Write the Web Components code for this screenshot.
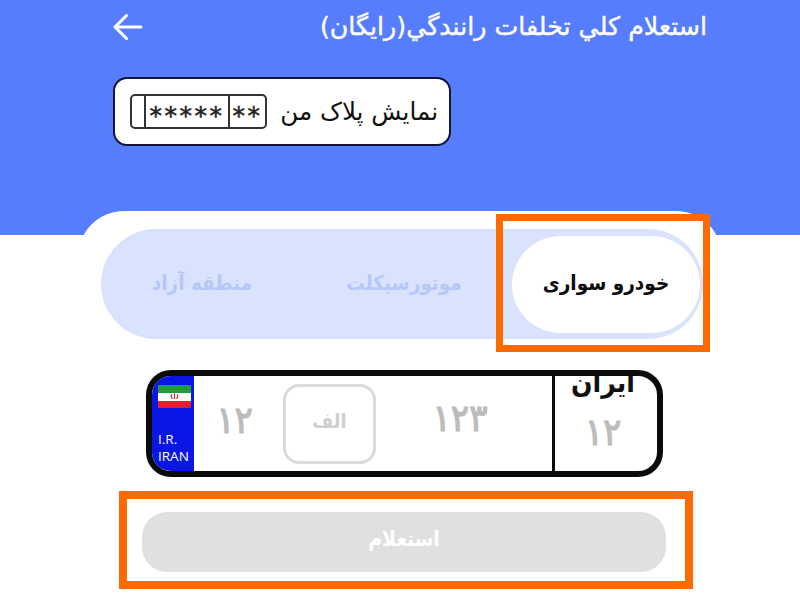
<!DOCTYPE html>
<html lang="fa">
<head>
<meta charset="utf-8">
<title>استعلام</title>
<style>
html, body { margin: 0; padding: 0; background: #fff; }
body { width: 800px; height: 600px; overflow: hidden; position: relative; font-family: "DejaVu Sans", sans-serif; }
</style>
</head>
<body>
<app-hero>
  <span slot="title">استعلام كلي تخلفات رانندگي(رايگان)</span>
  <my-plate-chip>نمایش پلاک من</my-plate-chip>
</app-hero>
<app-sheet>
  <vehicle-tabs>
    <tab-item active>خودرو سواری</tab-item>
    <tab-item>موتورسیکلت</tab-item>
    <tab-item>منطقه آزاد</tab-item>
  </vehicle-tabs>
  <plate-input></plate-input>
  <submit-button>استعلام</submit-button>
</app-sheet>
<mark-box style="--x:496px;--y:214px;--w:214px;--h:138px;--b:7px"></mark-box>
<mark-box style="--x:119px;--y:491px;--w:574px;--h:98px;--b:8px"></mark-box>

<script>
class AppHero extends HTMLElement {
  constructor() {
    super();
    this.attachShadow({mode: "open"}).innerHTML = `
    <style>
      :host { display: block; height: 235px; background: #567dfd; color: #fff; box-sizing: border-box; padding: 9px 93px 0 113px; }
      .top { display: flex; justify-content: space-between; align-items: center; height: 36px; }
      .title { font-size: 25.300px; line-height: 36px; white-space: nowrap; -webkit-text-stroke: 0.400px #fff; }
      svg { display: block; }
      .chip { margin-top: 32px; }
    </style>
    <div class="top">
      <svg width="30" height="28" viewBox="0 0 30 28" fill="none" stroke="#fff" stroke-width="3" stroke-linecap="round" stroke-linejoin="round">
        <path d="M28 14H2.500M13.500 2.500L2 14l11.500 11.500"/>
      </svg>
      <div class="title" dir="rtl"><slot name="title"></slot></div>
    </div>
    <div class="chip"><slot></slot></div>`;
  }
}

class MyPlateChip extends HTMLElement {
  constructor() {
    super();
    this.attachShadow({mode: "open"}).innerHTML = `
    <style>
      :host { display: flex; align-items: center; justify-content: space-between; box-sizing: border-box; width: 338px; height: 69px;
        padding: 0 11px 0 15px; background: #fff; border: 2px solid #14143c; border-radius: 14px; color: #111; }
      .label { font-size: 24.600px; white-space: nowrap; }
      .mini { display: flex; align-items: stretch; box-sizing: border-box; width: 137px; height: 35px; border: 2px solid #333; border-radius: 5px; color: #222; font-size: 25px; -webkit-text-stroke: 0.500px #222; }
      .mini span { display: block; box-sizing: border-box; height: 31px; padding-top: 8px; line-height: 23px; white-space: nowrap; letter-spacing: 2.500px; }
      .a { width: 12px; }
      .b { width: 86px; border-left: 2px solid #333; border-right: 2px solid #333; text-align: center; }
      .c { flex: 1; text-align: center; }
    </style>
    <div class="mini"><span class="a"></span><span class="b">*****</span><span class="c">**</span></div>
    <div class="label" dir="rtl"><slot></slot></div>`;
  }
}

class AppSheet extends HTMLElement {
  constructor() {
    super();
    this.attachShadow({mode: "open"}).innerHTML = `
    <style>
      :host { display: flex; flex-direction: column; align-items: flex-start; box-sizing: border-box; width: 644px; height: 389px; margin: -24px 0 0 78px;
        padding: 18px 0 0 23px; background: #fff; border-radius: 46px 46px 0 0; position: relative; }
    </style>
    <slot></slot>`;
  }
}

class VehicleTabs extends HTMLElement {
  constructor() {
    super();
    this.attachShadow({mode: "open"}).innerHTML = `
    <style>
      :host { display: flex; flex: none; box-sizing: border-box; width: 602px; height: 110px; padding: 7px 3px; background: #d9e3fd; border-radius: 55px; }
      div { display: flex; width: 100%; }
    </style>
    <div dir="rtl"><slot></slot></div>`;
  }
}

class TabItem extends HTMLElement {
  constructor() {
    super();
    this.attachShadow({mode: "open"}).innerHTML = `
    <style>
      :host { display: flex; flex: none; align-items: center; justify-content: center; width: 188px; height: 97px; border-radius: 49px; font-family: "DejaVu Sans Condensed", "DejaVu Sans", sans-serif; font-size: 20.500px; font-weight: bold; color: #b6c8f8; white-space: nowrap; padding-bottom: 4px; box-sizing: border-box; }
      :host([active]) { background: #fff; color: #0c0c0c; }
      :host(:nth-child(2)) { width: 216px; }
      :host(:nth-child(3)) { flex: 1; padding-left: 4px; }
    </style>
    <slot></slot>`;
  }
}

class PlateInput extends HTMLElement {
  constructor() {
    super();
    this.attachShadow({mode: "open"}).innerHTML = `
    <style>
      :host { display: flex; flex: none; box-sizing: border-box; width: 517px; height: 107px; margin: 31px 0 0 45px; border: 6px solid #0b0b0b; border-radius: 25px; overflow: hidden; background: #fff; color: #bcbcbc; font-family: "DejaVu Sans Condensed", "DejaVu Sans", sans-serif; font-size: 38px; }
      .eu { flex: none; width: 42px; background: #0a16e6; color: #fff; font: 13.500px/17px "Open Sans", sans-serif; display: flex; flex-direction: column; padding: 9px 0 0 6px; box-sizing: border-box; }
      .eu svg { display: block; margin-bottom: 23px; }
      .num { display: flex; align-items: center; justify-content: center; padding-bottom: 8px; box-sizing: border-box; -webkit-text-stroke: 1.200px #bcbcbc; letter-spacing: -1px; }
      .n1 { width: 89px; padding-right: 8px; }
      .letter { flex: none; box-sizing: border-box; width: 93px; height: 80px; margin-top: 8px; border: 3px solid #dadada; border-radius: 16px; display: flex; align-items: center; justify-content: center; font-size: 20px; font-weight: bold; color: #cfcfcf; padding-bottom: 6px; }
      .n2 { width: 176px; padding-right: 8px; padding-bottom: 12px; }
      .side { box-sizing: border-box; flex: 1; border-left: 3px solid #0b0b0b; display: flex; flex-direction: column; align-items: center; padding-right: 6px; }
      .country { height: 23px; overflow: hidden; font-size: 28px; font-weight: bold; color: #111; flex: none; }
      .country span { display: block; margin-top: -8px; line-height: 30px; }
      .side .num { flex: 1; padding-bottom: 6px; }
    </style>
    <div class="eu">
      <svg width="33" height="23" viewBox="0 0 33 23">
        <rect width="33" height="8" fill="#1f9a45"/>
        <rect y="8" width="33" height="8" fill="#fff"/>
        <rect y="16" width="33" height="7" fill="#e2202c"/>
        <path d="M16.500 8.500v5.500M14 9.500c-1.500 1.500-1 3.500 1 4M19 9.500c1.500 1.500 1 3.500-1 4" fill="none" stroke="#c0303a" stroke-width="1.200"/>
      </svg>
      <span>I.R.</span><span>IRAN</span>
    </div>
    <div class="num n1">۱۲</div>
    <div class="letter">الف</div>
    <div class="num n2">۱۲۳</div>
    <div class="side">
      <div class="country" dir="rtl"><span>ایران</span></div>
      <div class="num">۱۲</div>
    </div>`;
  }
}

class SubmitButton extends HTMLElement {
  constructor() {
    super();
    this.attachShadow({mode: "open"}).innerHTML = `
    <style>
      :host { display: flex; flex: none; align-items: center; justify-content: center; box-sizing: border-box; width: 524px; height: 60px; margin: 35px 0 0 41px; padding-bottom: 6px; background: #e0e0e0; border-radius: 25px; color: #fff; font-family: "DejaVu Sans Condensed", "DejaVu Sans", sans-serif; font-size: 21px; font-weight: bold; }
    </style>
    <slot></slot>`;
  }
}

class MarkBox extends HTMLElement {
  constructor() {
    super();
    this.attachShadow({mode: "open"}).innerHTML = `
    <style>
      :host { position: absolute; left: var(--x); top: var(--y); width: var(--w); height: var(--h); box-sizing: border-box; border: var(--b) solid #ff6a00; pointer-events: none; }
    </style>`;
  }
}

customElements.define("app-hero", AppHero);
customElements.define("my-plate-chip", MyPlateChip);
customElements.define("app-sheet", AppSheet);
customElements.define("vehicle-tabs", VehicleTabs);
customElements.define("tab-item", TabItem);
customElements.define("plate-input", PlateInput);
customElements.define("submit-button", SubmitButton);
customElements.define("mark-box", MarkBox);
</script>
</body>
</html>
